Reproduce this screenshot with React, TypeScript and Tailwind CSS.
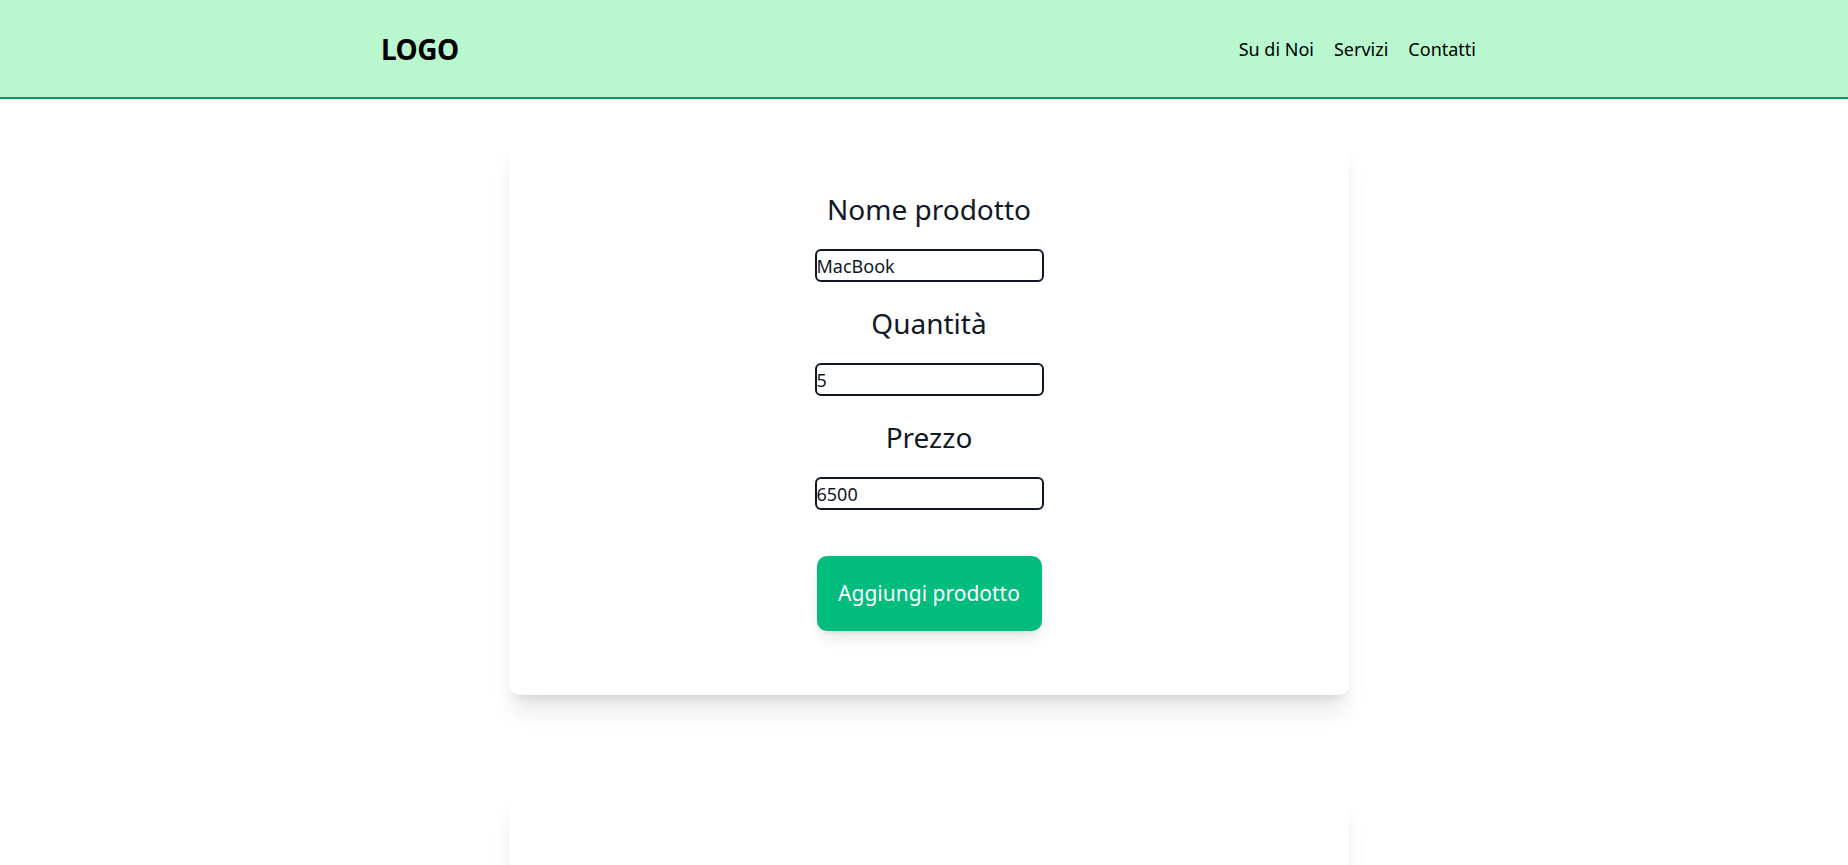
export default function App() {
  const fields = [
    { label: "Nome prodotto", value: "MacBook" },
    { label: "Quantità", value: "5" },
    { label: "Prezzo", value: "6500" },
  ];

  return (
    <div className="min-h-screen bg-white font-['Noto_Sans',sans-serif] text-gray-900">
      <header className="h-[99px] border-b-2 border-emerald-600 bg-green-200">
        <div className="mx-auto flex h-full max-w-6xl items-center justify-between px-6">
          <span className="pl-[9px] text-[28px] font-bold tracking-[-0.5px] text-black">LOGO</span>
          <nav className="flex gap-5 text-lg text-black">
            <a href="#">Su di Noi</a>
            <a href="#">Servizi</a>
            <a href="#">Contatti</a>
          </nav>
        </div>
      </header>

      <main className="mx-auto w-[850px] pl-[10px] pt-[38px]">
        <div className="flex flex-col items-center rounded-[10px] bg-white pt-[54px] pb-[64px] shadow-xl">
          {fields.map((f) => (
            <div key={f.label} className="flex flex-col items-center">
              <h2 className="mb-[22px] h-9 text-[28px] leading-9">{f.label}</h2>
              <input
                className="mb-[23px] h-[33px] w-[229px] rounded-md border-2 border-gray-900 text-lg outline-none"
                defaultValue={f.value}
              />
            </div>
          ))}
          <button className="mt-[23px] h-[75px] w-[225px] rounded-[10px] bg-emerald-500 text-[21px] text-white shadow-lg">
            Aggiungi prodotto
          </button>
        </div>

        <div className="mt-[97px] h-[300px] rounded-[10px] bg-white shadow-xl"></div>
      </main>
    </div>
  );
}
